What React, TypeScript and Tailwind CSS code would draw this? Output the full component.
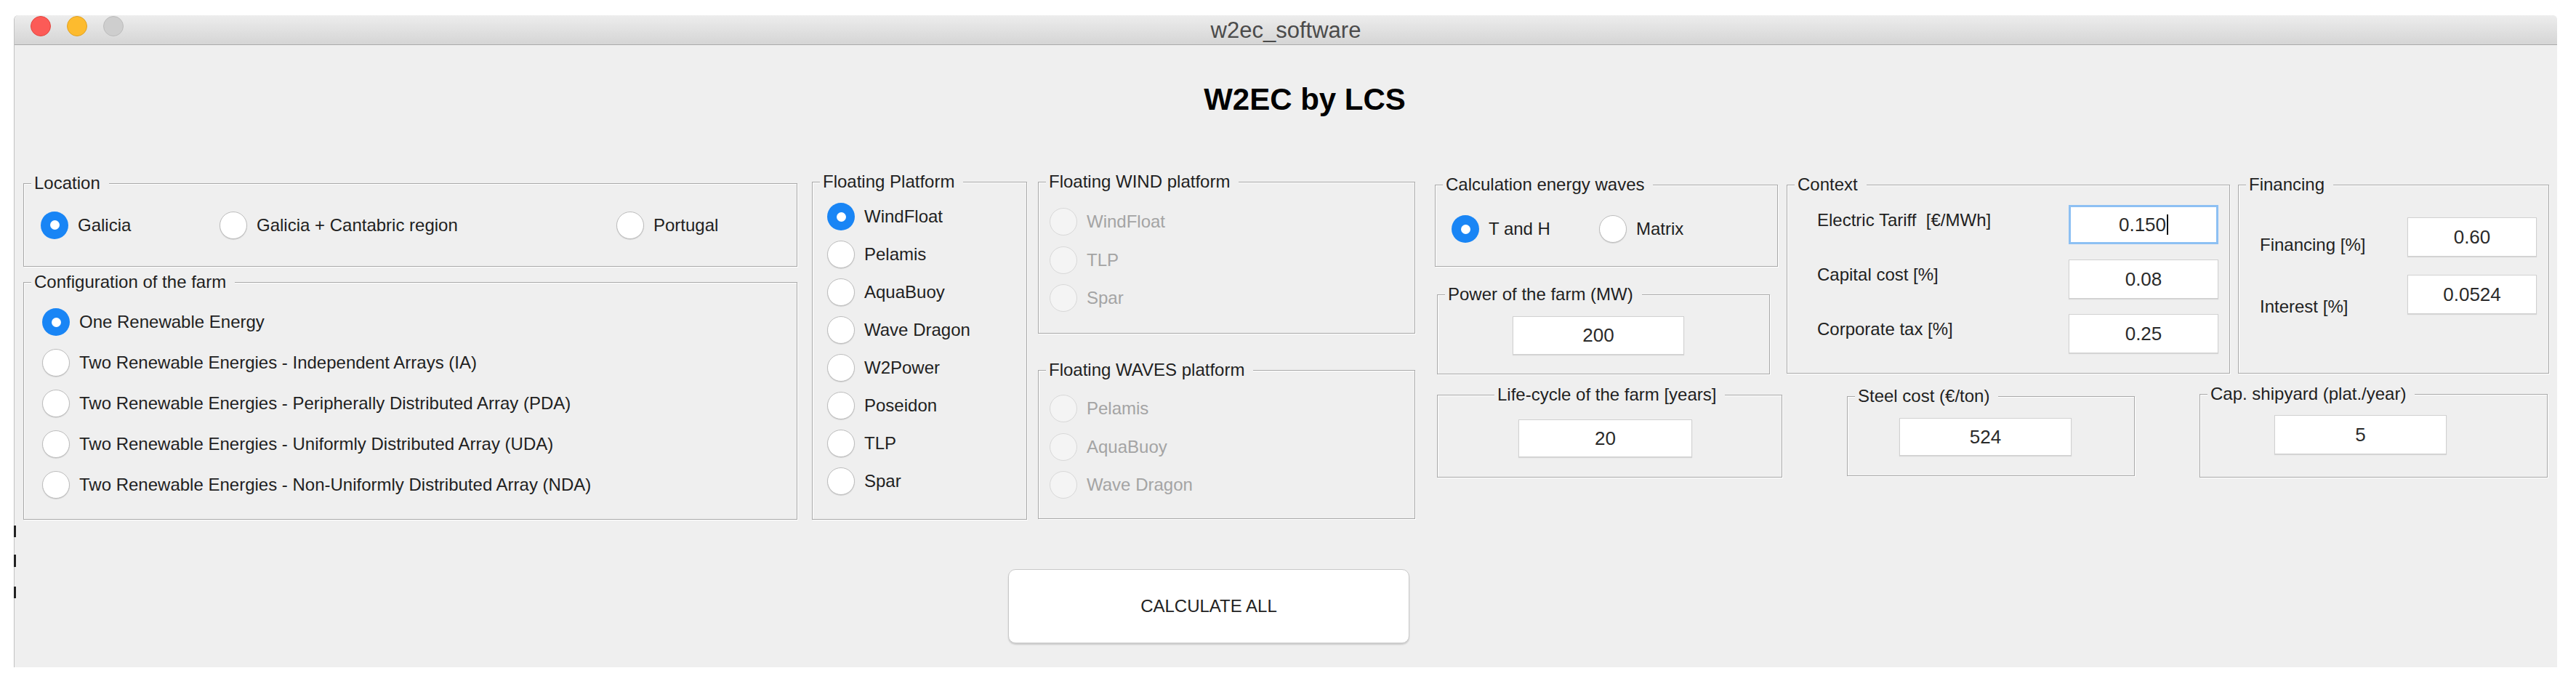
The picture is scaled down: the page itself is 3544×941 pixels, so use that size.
import type { ReactNode } from 'react';

type RadioProps = { label: string; checked?: boolean; disabled?: boolean };

function Radio({ label, checked, disabled }: RadioProps) {
    const circle = checked
        ? 'bg-[#1985f5]'
        : disabled
          ? 'bg-[#f4f4f4] border border-[#d8d8d8]'
          : 'bg-white border border-[#bdbdbd] shadow-[0_1px_1px_rgba(0,0,0,0.12)]';
    return (
        <div className="flex items-center gap-[13px]">
            <span className={`w-[38px] h-[38px] shrink-0 rounded-full flex items-center justify-center ${circle}`}>
                {checked && <span className="w-[13px] h-[13px] rounded-full bg-white" />}
            </span>
            <span className={`whitespace-nowrap ${disabled ? 'text-[#a4a4a4]' : 'text-[#1f1f1f]'}`}>{label}</span>
        </div>
    );
}

type GroupProps = { title: string; className?: string; titlePos?: string; children?: ReactNode };

// etched MATLAB-style panel, title sits on the top line
function Group({ title, className = '', titlePos = 'left-[10px]', children }: GroupProps) {
    return (
        <div className={`relative shrink-0 border border-[#a8a8a8] shadow-[inset_1px_1px_0_#ffffff,1px_1px_0_#ffffff] ${className}`}>
            <span className={`absolute -top-[14px] ${titlePos} bg-[#efefef] pl-[4px] pr-[12px] leading-[26px] text-[#1f1f1f] whitespace-nowrap`}>
                {title}
            </span>
            {children}
        </div>
    );
}

type FieldProps = { value: string; className?: string; focused?: boolean };

function Field({ value, className = '', focused }: FieldProps) {
    const frame = focused
        ? 'border-[3px] border-[#8dc0f3]'
        : 'border border-[#d1d1d1] shadow-[0_1px_1px_rgba(0,0,0,0.1)]';
    return (
        <div className={`flex items-center justify-center bg-white text-[26px] text-[#2a2a2a] ${frame} ${className}`}>
            <span>{value}</span>
            {focused && <span className="ml-[1px] inline-block w-[2px] h-[28px] bg-[#111111]" />}
        </div>
    );
}

const configOptions = [
    'One Renewable Energy',
    'Two Renewable Energies - Independent Arrays (IA)',
    'Two Renewable Energies - Peripherally Distributed Array (PDA)',
    'Two Renewable Energies - Uniformly Distributed Array (UDA)',
    'Two Renewable Energies - Non-Uniformly Distributed Array (NDA)',
];

const platforms = ['WindFloat', 'Pelamis', 'AquaBuoy', 'Wave Dragon', 'W2Power', 'Poseidon', 'TLP', 'Spar'];

export default function App() {
    return (
        <div className="w-[3544px] h-[941px] bg-white pt-[21px] pl-[19px] font-['Liberation_Sans',Arial,sans-serif] text-[24px]">
            <div className="relative w-[3499px] h-[897px] flex flex-col bg-[#efefef] border-l border-[#c2c2c2] rounded-t-[6px]">
                {/* stray dark marks on the left window edge */}
                <span className="absolute left-[-1px] top-[702px] w-[3px] h-[16px] bg-[#222222]" />
                <span className="absolute left-[-1px] top-[742px] w-[3px] h-[17px] bg-[#222222]" />
                <span className="absolute left-[-1px] top-[786px] w-[3px] h-[16px] bg-[#222222]" />

                {/* title bar */}
                <div className="h-[41px] shrink-0 grid grid-cols-[1fr_auto_1fr] items-center rounded-t-[6px] bg-linear-to-b from-[#ededed] to-[#d5d5d5] border-b border-[#aaaaaa]">
                    <div className="flex gap-[22px] pl-[22px] self-start mt-[1px]">
                        <span className="w-[28px] h-[28px] rounded-full bg-[#fc5b57] border border-[#e3463f]" />
                        <span className="w-[28px] h-[28px] rounded-full bg-[#fdbb2e] border border-[#e0a123]" />
                        <span className="w-[28px] h-[28px] rounded-full bg-[#cecece] border border-[#bcbcbc]" />
                    </div>
                    <div className="text-[31px] leading-none text-[#4b4b4b]">w2ec_software</div>
                    <div />
                </div>

                {/* body */}
                <div className="flex-1 pl-[12px] pt-[54px]">
                    <h1 className="pl-[40px] text-center text-[42px] font-bold leading-none text-black">W2EC by LCS</h1>

                    <div className="flex items-start mt-[92px]">
                        {/* column 1 */}
                        <div className="w-[1065px] shrink-0 flex flex-col">
                            <Group title="Location" className="mt-[2px] h-[115px]">
                                <div className="grid grid-cols-[246px_546px_1fr] items-center h-full pl-[23px]">
                                    <Radio label="Galicia" checked />
                                    <Radio label="Galicia + Cantabric region" />
                                    <Radio label="Portugal" />
                                </div>
                            </Group>
                            <Group title="Configuration of the farm" className="mt-[21px] h-[327px]">
                                <div className="flex flex-col pt-[26px] pl-[25px]">
                                    {configOptions.map((o, i) => (
                                        <div key={o} className="h-[56px] flex items-center">
                                            <Radio label={o} checked={i === 0} />
                                        </div>
                                    ))}
                                </div>
                            </Group>
                        </div>

                        {/* column 2 */}
                        <Group title="Floating Platform" className="ml-[20px] w-[296px] h-[465px]">
                            <div className="flex flex-col pt-[21px] pl-[20px]">
                                {platforms.map((p, i) => (
                                    <div key={p} className="h-[52px] flex items-center">
                                        <Radio label={p} checked={i === 0} />
                                    </div>
                                ))}
                            </div>
                        </Group>

                        {/* column 3 */}
                        <div className="ml-[15px] w-[519px] shrink-0 flex flex-col">
                            <Group title="Floating WIND platform" className="h-[209px]">
                                <div className="flex flex-col pt-[28px] pl-[15px]">
                                    {['WindFloat', 'TLP', 'Spar'].map((p) => (
                                        <div key={p} className="h-[52.5px] flex items-center">
                                            <Radio label={p} disabled />
                                        </div>
                                    ))}
                                </div>
                            </Group>
                            <Group title="Floating WAVES platform" className="mt-[50px] h-[205px]">
                                <div className="flex flex-col pt-[26px] pl-[15px]">
                                    {['Pelamis', 'AquaBuoy', 'Wave Dragon'].map((p) => (
                                        <div key={p} className="h-[52.5px] flex items-center">
                                            <Radio label={p} disabled />
                                        </div>
                                    ))}
                                </div>
                            </Group>
                        </div>

                        {/* column 4 */}
                        <div className="ml-[27px] mt-[4px] w-[1533px] shrink-0 flex flex-col">
                            <div className="flex items-start">
                                <div className="w-[472px] shrink-0 flex flex-col">
                                    <Group title="Calculation energy waves" className="h-[113px]">
                                        <div className="flex items-center pt-[41px] pl-[22px]">
                                            <div className="w-[203px]">
                                                <Radio label="T and H" checked />
                                            </div>
                                            <Radio label="Matrix" />
                                        </div>
                                    </Group>
                                    <Group title="Power of the farm (MW)" className="mt-[38px] ml-[3px] w-[458px] h-[110px]">
                                        <div className="pt-[29px] pl-[103px]">
                                            <Field value="200" className="w-[236px] h-[53px]" />
                                        </div>
                                    </Group>
                                </div>

                                <Group title="Context" className="ml-[12px] w-[610px] h-[260px]">
                                    <div className="grid grid-cols-[346px_206px] gap-y-[21px] pt-[27px] pl-[41px]">
                                        <span className="self-center mb-[13px] whitespace-pre text-[#1f1f1f]">Electric Tariff  [€/MWh]</span>
                                        <Field value="0.150" focused className="h-[54px]" />
                                        <span className="self-center mb-[13px] text-[#1f1f1f]">Capital cost [%]</span>
                                        <Field value="0.08" className="h-[54px]" />
                                        <span className="self-center mb-[13px] text-[#1f1f1f]">Corporate tax [%]</span>
                                        <Field value="0.25" className="h-[54px]" />
                                    </div>
                                </Group>

                                <Group title="Financing" className="ml-[11px] w-[428px] h-[260px]">
                                    <div className="grid grid-cols-[203px_178px] gap-y-[23px] pt-[44px] pl-[29px]">
                                        <span className="self-center mt-[20px] text-[#1f1f1f]">Financing [%]</span>
                                        <Field value="0.60" className="h-[54px]" />
                                        <span className="self-center mt-[26px] text-[#1f1f1f]">Interest [%]</span>
                                        <Field value="0.0524" className="h-[54px]" />
                                    </div>
                                </Group>
                            </div>

                            <div className="flex items-start mt-[28px]">
                                <Group title="Life-cycle of the farm [years]" titlePos="left-[78px]" className="ml-[3px] w-[475px] h-[114px]">
                                    <div className="pt-[33px] pl-[111px]">
                                        <Field value="20" className="w-[239px] h-[52px]" />
                                    </div>
                                </Group>
                                <Group title="Steel cost (€/ton)" className="ml-[89px] mt-[2px] w-[396px] h-[110px]">
                                    <div className="pt-[29px] pl-[71px]">
                                        <Field value="524" className="w-[237px] h-[52px]" />
                                    </div>
                                </Group>
                                <Group title="Cap. shipyard (plat./year)" className="ml-[89px] -mt-[1px] w-[479px] h-[115px]">
                                    <div className="pt-[28px] pl-[102px]">
                                        <Field value="5" className="w-[237px] h-[54px]" />
                                    </div>
                                </Group>
                            </div>
                        </div>
                    </div>

                    <button className="ml-[1355px] mt-[68px] w-[552px] h-[102px] rounded-[10px] bg-white border border-[#c9c9c9] shadow-[0_2px_2px_rgba(0,0,0,0.15)] text-[24px] text-[#222222]">
                        CALCULATE ALL
                    </button>
                </div>
            </div>
        </div>
    );
}
